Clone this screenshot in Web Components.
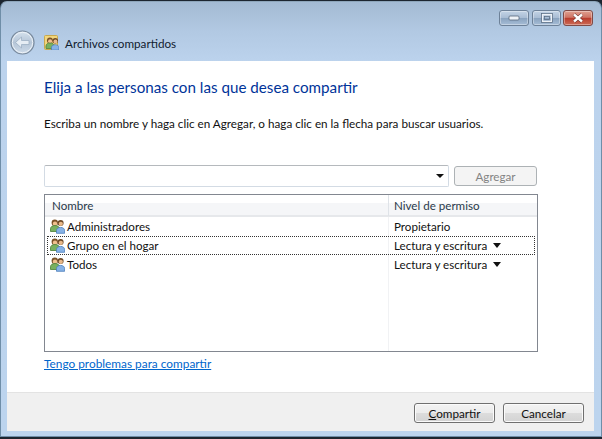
<!DOCTYPE html>
<html>
<head>
<meta charset="utf-8">
<style>
html, body { margin: 0; padding: 0; background: #000; }
body { width: 602px; height: 439px; overflow: hidden; font: 12px Lato, sans-serif; color: #1a1a1a; }
</style>
</head>
<body>
<share-window>
  <win-titlebar slot="top"></win-titlebar>
  <win-nav slot="top" caption="Archivos compartidos"></win-nav>
  <share-page>
    <h-line>Elija a las personas con las que desea compartir</h-line>
    <p-line>Escriba un nombre y haga clic en Agregar, o haga clic en la flecha para buscar usuarios.</p-line>
    <add-row></add-row>
    <perm-list>
      <perm-row name="Administradores" level="Propietario"></perm-row>
      <perm-row name="Grupo en el hogar" level="Lectura y escritura" menu focused></perm-row>
      <perm-row name="Todos" level="Lectura y escritura" menu></perm-row>
    </perm-list>
    <help-link>Tengo problemas para compartir</help-link>
  </share-page>
  <win-footer></win-footer>
</share-window>

<script>
// people glyph used by the list rows and the folder
const PEOPLE = `
<circle cx="10.600" cy="4" r="3" fill="#6e4a28"/>
<circle cx="10.800" cy="4.800" r="2.100" fill="#e9b98a"/>
<circle cx="4.800" cy="3.800" r="3.200" fill="#7a5228"/>
<circle cx="5" cy="4.700" r="2.200" fill="#efc08e"/>
<path d="M.5 12.500v-2.700c0-2.100 2-3.300 4.500-3.300s4.500 1.200 4.500 3.300v2.700z" fill="#78b060" stroke="#4a7d36" stroke-width=".8"/>
<path d="M6.500 14.300v-2.700c0-2.100 1.800-3.200 4.100-3.200s4 1.100 4 3.200v2.700z" fill="#86b2e6" stroke="#4a7cba" stroke-width=".8"/>`;

function host(el, html) {
  el.attachShadow({mode: 'open'}).innerHTML = html;
}

customElements.define('share-window', class extends HTMLElement {
  constructor() {
    super();
    host(this, `<style>
      :host { display: flex; flex-direction: column; width: 602px; height: 439px; box-sizing: border-box;
        padding: 1px 0 2px; background: #1c2530; }
      .glass { flex: 1; display: flex; flex-direction: column; border: 1px solid #6f8ea8; border-top-color: #8ea6bb;
        border-radius: 7px 7px 0 0; padding: 0 7px 5px 6px;
        background: linear-gradient(#a3bad3 0, #b2c9e3 30px, #bcd3ed 60px, #bcd4ee 100%); }
      .client { flex: 1; display: flex; flex-direction: column; background: #fff; min-height: 0; }
    </style>
    <div class="glass"><slot name="top"></slot><div class="client"><slot></slot></div></div>`);
  }
});

customElements.define('win-titlebar', class extends HTMLElement {
  constructor() {
    super();
    host(this, `<style>
      :host { display: flex; justify-content: flex-end; height: 25px; box-sizing: border-box;
        padding: 8px 1px 0 0; }
      .b { width: 30px; height: 16px; box-sizing: border-box; border: 1px solid #6d8198; border-radius: 3px;
        display: flex; align-items: center; justify-content: center;
        background: linear-gradient(#c3d3e5 0, #a9bdd4 48%, #8aa3bf 52%, #a6bdd6 100%);
        box-shadow: inset 0 0 0 1px rgba(255,255,255,.35); }
      .m { width: 29px; margin: 0 2px 0 3px; }
      .x { background: linear-gradient(#e0a090 0, #cf7565 45%, #b93d2d 52%, #cc6a55 100%); border-color: #7f4a46; }
      svg { display: block; }
    </style>
    <div class="b"><svg width="12" height="6"><rect x="1" y="1" width="10" height="4" rx="1" fill="#eef2f7" stroke="#55677c" stroke-width=".8"/></svg></div>
    <div class="b m"><svg width="12" height="10"><rect x="1.500" y="1.500" width="9" height="7" fill="none" stroke="#eef2f7" stroke-width="1.500"/><rect x=".5" y=".5" width="11" height="9" fill="none" stroke="#55677c" stroke-width=".7"/><rect x="3.500" y="3.500" width="5" height="3" fill="none" stroke="#55677c" stroke-width=".7"/></svg></div>
    <div class="b x"><svg width="14" height="10"><path d="M3 1.500 11 8.500M11 1.500 3 8.500" stroke="#5e2a24" stroke-width="3.600"/><path d="M3 1.500 11 8.500M11 1.500 3 8.500" stroke="#fff" stroke-width="2.400"/></svg></div>`);
  }
});

customElements.define('win-nav', class extends HTMLElement {
  constructor() {
    super();
    host(this, `<style>
      :host { display: flex; align-items: center; height: 34px; box-sizing: border-box; padding: 0 0 3px 3px; }
      .back { width: 25px; height: 25px; display: block; margin-right: 9px; }
      .folder { width: 15px; height: 15px; display: block; margin-right: 6px; }
      span { font-size: 11.700px; color: #10202f; }
    </style>
    <svg class="back" viewBox="0 0 25 25">
      <defs><linearGradient id="g" x1="0" y1="0" x2="0" y2="1"><stop offset="0" stop-color="#d6e2ee"/><stop offset=".5" stop-color="#b5c5d7"/><stop offset="1" stop-color="#cddbe9"/></linearGradient></defs>
      <circle cx="12.500" cy="12.500" r="11.500" fill="url(#g)" stroke="#77889b" stroke-width="1.200"/>
      <circle cx="12.500" cy="12.500" r="10.200" fill="none" stroke="#eef3f8" stroke-width="1"/>
      <path d="M5.500 12.500 11.500 7v3.500h7.500v4H11.500V18z" fill="#e6edf4" stroke="#9db0c4" stroke-width=".8"/>
    </svg>
    <svg class="folder" viewBox="0 0 15 15">
      <rect x=".5" y=".5" width="13" height="14" rx="1" fill="#f2d67c" stroke="#c9a94e"/>
      <g transform="translate(1.500 2) scale(.92)">${PEOPLE}</g>
    </svg>
    <span>${this.getAttribute('caption')}</span>`);
  }
});

customElements.define('share-page', class extends HTMLElement {
  constructor() {
    super();
    host(this, `<style>
      :host { display: flex; flex-direction: column; flex: 1; min-height: 0; padding: 15px 56px 0 37px; }
    </style><slot></slot>`);
  }
});

customElements.define('h-line', class extends HTMLElement {
  constructor() {
    super();
    host(this, `<style>
      :host { display: block; font-size: 15.200px; line-height: 22px; color: #003399; white-space: nowrap; }
    </style><slot></slot>`);
  }
});

customElements.define('p-line', class extends HTMLElement {
  constructor() {
    super();
    host(this, `<style>
      :host { display: block; margin-top: 17px; font-size: 11.700px; line-height: 16px; color: #111; white-space: nowrap; }
    </style><slot></slot>`);
  }
});

customElements.define('add-row', class extends HTMLElement {
  constructor() {
    super();
    host(this, `<style>
      :host { display: flex; gap: 5px; margin-top: 34px; align-items: center; }
      .combo { width: 405px; height: 22px; box-sizing: border-box; border: 1px solid #d3dbe4; border-top-color: #b5b9bd;
        border-radius: 2px; display: flex; justify-content: flex-end; align-items: center; padding-right: 4px; background: #fff; }
      .arrow { width: 0; height: 0; border: 4px solid transparent; border-top: 4px solid #111; border-bottom: 0; }
      .add { width: 83px; height: 20px; box-sizing: border-box; border: 1px solid #adb2b5; border-radius: 3px;
        background: #f4f4f4; color: #838383; font-size: 11.600px; display: flex; align-items: center; justify-content: center; }
      u { text-decoration-thickness: 1px; }
    </style>
    <div class="combo"><div class="arrow"></div></div>
    <div class="add"><span>A<u>g</u>regar</span></div>`);
  }
});

customElements.define('perm-list', class extends HTMLElement {
  constructor() {
    super();
    host(this, `<style>
      :host { display: flex; flex-direction: column; position: relative; margin-top: 7px; width: 494px; height: 158px; box-sizing: border-box;
        border: 1px solid #828790; background: #fff; font-size: 11.600px; }
      .head { display: grid; grid-template-columns: 343px 1fr; border-bottom: 2px solid #e6e8eb;
        background: linear-gradient(#fff 0, #fff 40%, #f5f6f8 41%, #f5f6f8 100%); box-sizing: border-box; height: 22px; padding-top: 1px; }
      .head div { padding: 0 0 0 7px; line-height: 20px; color: #2a3a4a; }
      .head div + div { border-left: 1px solid #dfe3e8; padding-left: 5px; margin-top: -1px; padding-top: 1px; }
      .body { flex: 1; display: flex; flex-direction: column; }
      /* column rule below the header */
      .rule { position: absolute; left: 343px; top: 22px; bottom: 0; width: 1px; background: #f1f2f4; }
    </style>
    <div class="head"><div>Nombre</div><div>Nivel de permiso</div></div>
    <div class="rule"></div>
    <div class="body"><slot></slot></div>`);
  }
});

customElements.define('perm-row', class extends HTMLElement {
  constructor() {
    super();
    const menu = this.hasAttribute('menu') ? '<i></i>' : '';
    host(this, `<style>
      :host { display: grid; grid-template-columns: 341px 1fr; height: 19px; box-sizing: border-box; margin: 0 2px;
        border: 1px solid transparent; line-height: 17px; white-space: nowrap; color: #111; position: relative; }
      :host([focused]) { border: 1px dotted #333; }
      .n { display: flex; align-items: center; padding-left: 2px; }
      svg { width: 15px; height: 15px; display: block; margin-right: 2px; }
      .l { display: flex; align-items: center; padding-left: 5px; }
      i { display: block; width: 0; height: 0; margin-left: 6px; border: 4.500px solid transparent; border-top: 5px solid #111; border-bottom: 0; }
    </style>
    <div class="n"><svg viewBox="0 0 15 15">${PEOPLE}</svg><span>${this.getAttribute('name')}</span></div>
    <div class="l"><span>${this.getAttribute('level')}</span>${menu}</div>`);
  }
});

customElements.define('help-link', class extends HTMLElement {
  constructor() {
    super();
    host(this, `<style>
      :host { display: block; margin-top: 4px; font-size: 11.850px; line-height: 16px; color: #0066cc; text-decoration: underline; white-space: nowrap; }
    </style><slot></slot>`);
  }
});

customElements.define('win-footer', class extends HTMLElement {
  constructor() {
    super();
    host(this, `<style>
      :host { display: flex; justify-content: flex-end; gap: 8px; height: 39px; box-sizing: border-box;
        padding: 10px 10px 0 0; background: #f0f0f0; border-top: 1px solid #e3e3e3; }
      .b { width: 81px; height: 20px; box-sizing: border-box; border: 1px solid #707070; border-radius: 3px;
        background: linear-gradient(#f3f3f3 0, #ececec 48%, #dcdcdc 52%, #d3d3d3 100%);
        box-shadow: inset 0 0 0 1px #fbfbfb; font-size: 11.700px; color: #111;
        display: flex; align-items: center; justify-content: center; }
    </style>
    <div class="b"><span><u>C</u>ompartir</span></div>
    <div class="b">Cancelar</div>`);
  }
});
</script>
</body>
</html>
